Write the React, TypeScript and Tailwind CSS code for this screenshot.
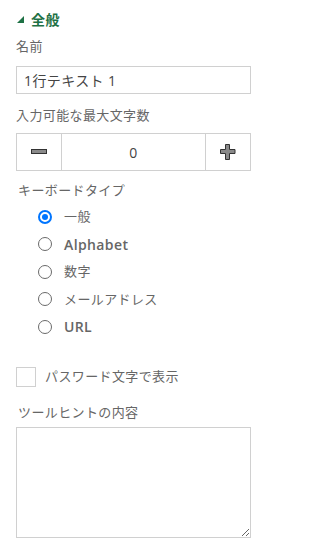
import React, { useState } from 'react';

const font = { fontFamily: '"Open Sans", "Noto Sans CJK JP", sans-serif' };

const keyboardTypes = ['一般', 'Alphabet', '数字', 'メールアドレス', 'URL'];

const App: React.FC = () => {
  const [name, setName] = useState('1行テキスト 1');
  const [maxLength, setMaxLength] = useState(0);
  const [keyboard, setKeyboard] = useState('一般');
  const [password, setPassword] = useState(false);

  return (
    <div className="w-[267px] h-[557px] bg-white px-4 text-[#666] text-[13px] tracking-[0.03em]" style={font}>
      <div className="mt-[9px] flex h-5 items-center text-[#1e7145]">
        <svg width="7" height="7" viewBox="0 0 7 7" className="ml-[1px] mr-[7px] mt-[1px]">
          <polygon points="7,0 7,7 0,7" fill="#1e7145" />
        </svg>
        <span className="text-[14px] font-semibold">全般</span>
      </div>

      <div className="mt-2 flex h-5 items-center">名前</div>
      <input
        value={name}
        onChange={(e) => setName(e.target.value)}
        className="mt-[9px] block h-[28px] w-full border border-[#d0d0d0] px-[7px] text-[14px] text-[#444] outline-none"
        style={font}
      />

      <div className="mt-3 flex h-5 items-center">入力可能な最大文字数</div>
      <div className="mt-[7px] flex h-[38px] border border-[#d0d0d0]">
        <button
          onClick={() => setMaxLength(Math.max(0, maxLength - 1))}
          className="flex w-[45px] items-center justify-center border-r border-[#d0d0d0]"
        >
          <svg width="16" height="6" viewBox="0 0 16 6">
            <rect x="0.5" y="0.5" width="15" height="4" fill="#8a8a8a" stroke="#333" />
          </svg>
        </button>
        <div className="flex flex-1 items-center justify-center text-[14px] text-[#444]">{maxLength}</div>
        <button
          onClick={() => setMaxLength(maxLength + 1)}
          className="flex w-[45px] items-center justify-center border-l border-[#d0d0d0]"
        >
          <svg width="16" height="16" viewBox="0 0 16 16">
            <path d="M5.5 0.5h4v5h5.5v4h-5.5v6h-4v-6h-5v-4h5z" fill="#8a8a8a" stroke="#333" />
          </svg>
        </button>
      </div>

      <div className="mt-[10px] flex h-5 items-center pl-[2px]">キーボードタイプ</div>
      <div className="mt-[2px] pl-[22px]">
        {keyboardTypes.map((t) => (
          <label key={t} className="flex h-[27.5px] cursor-pointer items-center" onClick={() => setKeyboard(t)}>
            {keyboard === t ? (
              <span className="flex h-[14px] w-[14px] shrink-0 items-center justify-center rounded-full border-2 border-[#0075ff]">
                <span className="h-[6px] w-[6px] rounded-full bg-[#0075ff]" />
              </span>
            ) : (
              <span className="h-[14px] w-[14px] shrink-0 rounded-full border border-[#6a6a6a]" />
            )}
            <span className={`ml-[12px] ${/^[A-Za-z]/.test(t) ? 'font-semibold text-[14px]' : ''}`}>{t}</span>
          </label>
        ))}
      </div>

      <label className="mt-[26px] flex h-5 items-center" onClick={() => setPassword(!password)}>
        <span className="flex h-5 w-5 items-center justify-center border border-[#d0d0d0] text-[#1e7145] text-[12px]">
          {password ? '✓' : ''}
        </span>
        <span className="ml-[9px]">パスワード文字で表示</span>
      </label>

      <div className="mt-4 flex h-5 items-center pl-[2px]">ツールヒントの内容</div>
      <textarea className="mt-1 block h-[111px] w-full border border-[#d0d0d0] outline-none" />
    </div>
  );
};

export default App;
